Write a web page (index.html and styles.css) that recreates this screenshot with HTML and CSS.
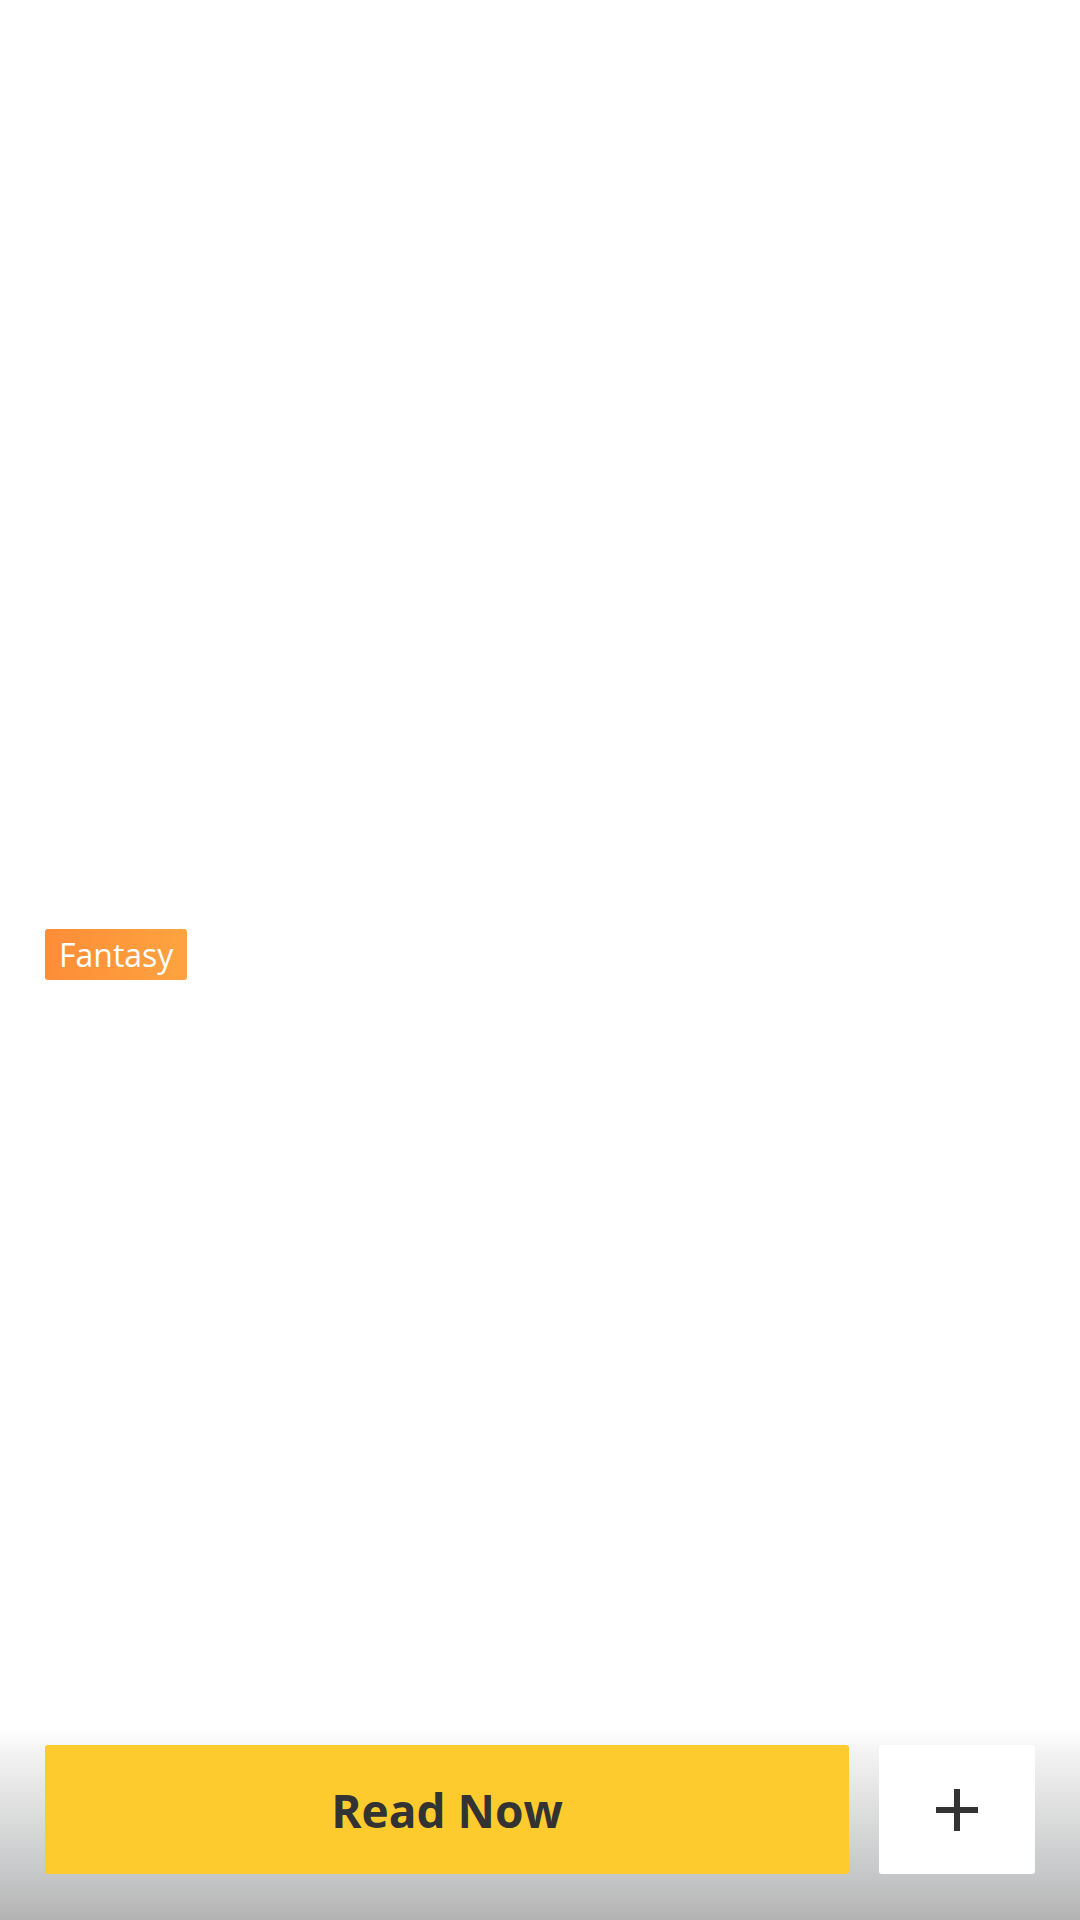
FILE: index.html
```html
<!DOCTYPE html>
<html lang="en">
<head>
<meta charset="utf-8">
<title>Book</title>
<link rel="stylesheet" href="styles.css">
</head>
<body>
<main class="page">
  <section class="cover"></section>
  <div class="tags">
    <span class="tag">Fantasy</span>
  </div>
</main>
<footer class="action-bar">
  <button class="btn-read">Read Now</button>
  <button class="btn-add" aria-label="Add to library">
    <svg width="42" height="42" viewBox="0 0 42 42"><path d="M21 0v42M0 21h42" stroke="#333333" stroke-width="6" fill="none"/></svg>
  </button>
</footer>
</body>
</html>
```
FILE: styles.css
```css
* { box-sizing: border-box; }
html, body { margin: 0; padding: 0; }
body {
  width: 1080px;
  height: 1920px;
  background: #ffffff;
  font-family: "Open Sans", "Lato", sans-serif;
  color: #333333;
  overflow: hidden;
  position: relative;
}
.page { display: flex; flex-direction: column; }
.cover { height: 929px; }
.tags { display: flex; padding: 0 45px; }
.tag {
  display: inline-block;
  height: 51px;
  line-height: 51px;
  padding: 0 14px;
  font-size: 32px;
  font-weight: 400;
  color: #ffffff;
  border-radius: 3px;
  background: linear-gradient(90deg, #fd8d37, #fea340);
}
.action-bar {
  position: absolute;
  left: 0;
  right: 0;
  bottom: 0;
  height: 190px;
  padding: 15px 45px 0;
  display: flex;
  align-items: flex-start;
  gap: 30px;
  background: linear-gradient(to bottom, rgba(255,255,255,0) 0%, #f4f4f4 10%, #c6c7c8 76%, #b3b3b3 100%);
}
.btn-read {
  flex: 1;
  height: 129px;
  border: none;
  border-radius: 3px;
  background: #fdcb2d;
  color: #333333;
  font-family: "Open Sans", "Lato", sans-serif;
  font-size: 46px;
  font-weight: 700;
  padding: 0;
}
.btn-add {
  width: 156px;
  height: 129px;
  border: none;
  border-radius: 3px;
  background: #ffffff;
  display: flex;
  align-items: center;
  justify-content: center;
  padding: 0;
}
```
